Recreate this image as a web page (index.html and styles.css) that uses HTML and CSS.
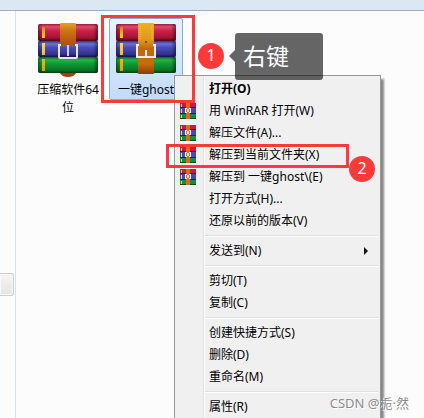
FILE: index.html
```html
<!DOCTYPE html>
<html lang="zh-CN">
<head>
<meta charset="utf-8">
<meta name="viewport" content="width=device-width, initial-scale=1">
<title>文件</title>
<link rel="stylesheet" href="styles.css">
</head>
<body>
<svg class="defs" aria-hidden="true">
  <defs>
    <linearGradient id="red" x2="0" y2="1"><stop offset="0" stop-color="#a01838"/><stop offset=".16" stop-color="#dc4c6c"/><stop offset=".4" stop-color="#cc2048"/><stop offset=".8" stop-color="#a41436"/><stop offset="1" stop-color="#4c0818"/></linearGradient>
    <linearGradient id="blue" x2="0" y2="1"><stop offset="0" stop-color="#34348c"/><stop offset=".18" stop-color="#7070d0"/><stop offset=".4" stop-color="#4c4cb8"/><stop offset=".8" stop-color="#343494"/><stop offset="1" stop-color="#141444"/></linearGradient>
    <linearGradient id="green" x2="0" y2="1"><stop offset="0" stop-color="#0c6424"/><stop offset=".18" stop-color="#2cb04c"/><stop offset=".4" stop-color="#109c34"/><stop offset=".8" stop-color="#087828"/><stop offset="1" stop-color="#043c10"/></linearGradient>
    <linearGradient id="strap" x2="0" y2="1"><stop offset="0" stop-color="#e8a020"/><stop offset=".35" stop-color="#cc7414"/><stop offset="1" stop-color="#b05008"/></linearGradient>
    <linearGradient id="strap-light" x2="0" y2="1"><stop offset="0" stop-color="#f0b020"/><stop offset=".35" stop-color="#dc9420"/><stop offset=".5" stop-color="#c06810"/><stop offset=".8" stop-color="#c86c10"/><stop offset="1" stop-color="#8c3c04"/></linearGradient>
    <linearGradient id="edge"><stop offset="0" stop-color="#000" stop-opacity=".4"/><stop offset=".08" stop-color="#000" stop-opacity="0"/><stop offset=".92" stop-color="#000" stop-opacity="0"/><stop offset="1" stop-color="#000" stop-opacity=".45"/></linearGradient>
    <linearGradient id="gold" x2="0" y2="1"><stop offset="0" stop-color="#c88c10"/><stop offset=".3" stop-color="#ffe040"/><stop offset="1" stop-color="#e09c10"/></linearGradient>
    <symbol id="books" viewBox="0 0 60 54">
      <rect y="1" width="60" height="17" rx="2" fill="url(#red)"/>
      <rect y="18" width="60" height="16" rx="2" fill="url(#blue)"/>
      <rect y="34" width="60" height="16" rx="2" fill="url(#green)"/>
      <rect y="1" width="60" height="49" rx="2" fill="url(#edge)"/>
      <path fill="url(#gold)" d="M4 4h3v11H4zM4 20h3v12H4zM4 36h3v12H4z"/>
    </symbol>
    <symbol id="small" viewBox="0 0 16 16">
      <path fill="#c81c48" d="M0 0h16v5H0z"/><path fill="#4848b8" d="M0 5h16v6H0z"/><path fill="#109038" d="M0 11h16v5H0z"/>
      <path fill="#601028" d="M0 4h16v1H0z"/><path fill="#202068" d="M0 10h16v1H0z"/><path fill="#084c18" d="M0 15h16v1H0z"/>
      <path fill="#f8d838" d="M1 1h1v3H1zM1 6h1v4H1zM1 12h1v3H1z"/>
      <path fill="#e06818" d="M6 0h4v16H6z"/>
      <path fill="#fff" d="M5 5h2v1H6v4H5zM9 5h2v5h-1V6H9zM6 9h1v1H6zM9 9h1v1H9z"/>
      <path fill="#f8d8c0" d="M7 6h2v3H7z"/>
    </symbol>
  </defs>
</svg>
<div class="window">
  <header class="toolbar"></header>
  <div class="body">
    <aside class="sidebar"><button class="handle" type="button" aria-label="面板"></button></aside>
    <main class="files">
      <a class="file" href="#">
        <svg class="archive" viewBox="0 0 60 54">
          <use href="#books" width="60" height="54"/>
          <path fill="#9c4410" d="M22 50h16q-2 4-8 4t-8-4z"/>
          <rect x="22" width="16" height="22" rx="1" fill="url(#strap)"/>
          <path fill="none" stroke="#e4e4ec" stroke-width="2" d="M23 22h-2v12q0 1 1 1h16q1 0 1-1V22h-2"/>
          <path fill="none" stroke="#d0d0dc" stroke-width="2" d="M30 22v11"/>
        </svg>
        <span>压缩软件64位</span>
      </a>
      <a class="file selected" href="#">
        <svg class="archive" viewBox="0 0 60 54">
          <use href="#books" width="60" height="54"/>
          <rect x="22" width="16" height="51" rx="1" fill="url(#strap-light)"/>
          <path fill="none" stroke="#f4c868" stroke-dasharray="1 1" d="M24 3v14M36 3v14"/>
          <circle cx="30" cy="19" r="1" fill="#703808"/>
          <path fill="none" stroke="#eee" stroke-width="2" d="M23 22h-2v12h18V22h-2M30 27v6"/>
        </svg>
        <span>一键ghost</span>
      </a>
    </main>
  </div>
</div>
<nav class="menu">
  <button class="item default" type="button"><i></i>打开(O)</button>
  <button class="item" type="button"><i><svg><use href="#small"/></svg></i>用 WinRAR 打开(W)</button>
  <button class="item" type="button"><i><svg><use href="#small"/></svg></i>解压文件(A)...</button>
  <button class="item" type="button"><i><svg><use href="#small"/></svg></i>解压到当前文件夹(X)</button>
  <button class="item" type="button"><i><svg><use href="#small"/></svg></i>解压到 一键ghost\(E)</button>
  <button class="item" type="button"><i></i>打开方式(H)...</button>
  <button class="item" type="button"><i></i>还原以前的版本(V)</button>
  <hr>
  <button class="item more" type="button"><i></i>发送到(N)</button>
  <hr>
  <button class="item" type="button"><i></i>剪切(T)</button>
  <button class="item" type="button"><i></i>复制(C)</button>
  <hr>
  <button class="item" type="button"><i></i>创建快捷方式(S)</button>
  <button class="item" type="button"><i></i>删除(D)</button>
  <button class="item" type="button"><i></i>重命名(M)</button>
  <hr>
  <button class="item" type="button"><i></i>属性(R)</button>
</nav>
<div class="frame frame-file"></div>
<div class="frame frame-item"></div>
<span class="step step-one">1</span>
<span class="step step-two">2</span>
<div class="tip">右键</div>
<div class="credit">CSDN @栀·然</div>
</body>
</html>
```
FILE: styles.css
```css
* { box-sizing: border-box; }
body {
  margin: 0;
  height: 100vh;
  overflow: hidden;
  position: relative;
  background: #fcfcfc;
  color: #000;
  font: 12px/18px "Noto Sans", "Noto Sans CJK SC", sans-serif;
}
.defs { position: absolute; width: 0; height: 0; }
.window { height: 100%; display: flex; flex-direction: column; }
.toolbar { height: 11px; background: #dce7f4; border-bottom: 1px solid #a0aec6; flex: none; }
.body { flex: 1; display: flex; }
.sidebar { width: 16px; border-right: 1px solid #d6e2f3; padding-top: 262px; flex: none; }
.handle {
  display: block;
  width: 14px;
  height: 23px;
  padding: 0;
  border: 1px solid #cdcdcd;
  border-left: 0;
  border-radius: 0 3px 3px 0;
  background: linear-gradient(#f5f5f5, #e4e4e4);
  box-shadow: inset 0 0 0 1px #f8f8f8;
}
.files { flex: 1; display: flex; align-items: flex-start; gap: 4px; padding: 7px 15px; }
.file {
  width: 74px;
  padding: 4px 4px 0;
  border: 1px solid transparent;
  border-radius: 2px;
  color: inherit;
  text-decoration: none;
  text-align: center;
}
.file span { display: block; }
.selected { height: 82px; border-color: #84acdd; background: linear-gradient(#eaf2fc, #c1dbfc); }
.archive { display: block; width: 60px; height: 54px; margin: 0 auto 4px; }
.menu {
  position: absolute;
  left: 174px;
  top: 75px;
  width: 207px;
  padding: 2px;
  border: 1px solid #979797;
  background: linear-gradient(90deg, #f0f0f0 28px, #e0e0e0 28px, #e0e0e0 29px, #fff 29px, #fff 30px, #f0f0f0 30px);
  box-shadow: 3px 4px 2px #888;
}
.item {
  display: flex;
  align-items: center;
  width: 100%;
  height: 22px;
  padding: 0;
  border: 0;
  background: none;
  color: inherit;
  font: inherit;
  text-align: left;
}
.item i { width: 32px; padding-left: 3px; flex: none; }
.item svg { display: block; width: 16px; height: 16px; }
.default { font-weight: bold; }
.more::after {
  content: "";
  margin: 0 10px 0 auto;
  border: 4px solid transparent;
  border-left-color: #111;
  border-right: 0;
}
hr { height: 2px; margin: 3px 0 3px 28px; border: 0; border-top: 1px solid #e0e0e0; background: #fff; }
.frame { position: absolute; border: 3px solid #fc3a3a; pointer-events: none; }
.frame-file { left: 101px; top: 15px; width: 94px; height: 88px; }
.frame-item { left: 166px; top: 144px; width: 183px; height: 24px; }
.step {
  position: absolute;
  width: 26px;
  height: 26px;
  border-radius: 50%;
  background: #fc3a3a;
  color: #fff;
  font-size: 16px;
  line-height: 25px;
  text-align: center;
}
.step-one { left: 198px; top: 43px; }
.step-two { left: 349px; top: 156px; }
.tip {
  position: absolute;
  left: 235px;
  top: 33px;
  width: 88px;
  height: 47px;
  padding-left: 8px;
  border-radius: 3px;
  background: rgba(0, 0, 0, .6);
  color: #fff;
  font-size: 23px;
  line-height: 47px;
}
.tip::before {
  content: "";
  position: absolute;
  right: 100%;
  top: 17px;
  border: 6px solid transparent;
  border-right-color: rgba(0, 0, 0, .6);
  border-left: 0;
}
.credit {
  position: absolute;
  right: 15px;
  bottom: 6px;
  color: #8c8c8c;
  font-size: 13px;
  text-shadow: 1px 1px #fff;
}
```
